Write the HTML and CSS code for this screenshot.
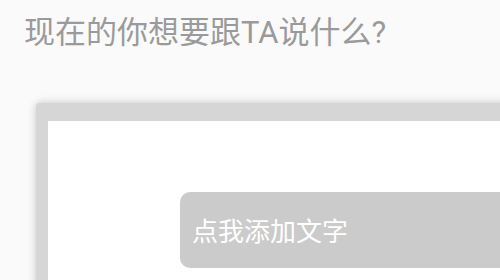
FILE: index.html
```html
<!DOCTYPE html>
<html lang="zh-CN">
<head>
    <meta charset="UTF-8">
    <title>说点什么</title>
    <link rel="stylesheet" href="styles.css">
</head>
<body>
    <div class="page">
        <h1 class="title">现在的你想要跟TA说什么?</h1>
        <div class="frame">
            <div class="paper">
                <div class="add-text">点我添加文字</div>
            </div>
        </div>
    </div>
</body>
</html>
```

FILE: styles.css
```css
*{
    margin: 0;
    padding: 0;
    box-sizing: border-box;
}
body{
    background: #fafafa;
    font-family: Roboto, "Noto Sans CJK SC", sans-serif;
}
.page{
    width: 500px;
    height: 280px;
    overflow: hidden;
    padding: 13px 0 0 24px;
}
.title{
    font-size: 31px;
    font-weight: normal;
    color: #9a9a9a;
    line-height: 40px;
    white-space: nowrap;
}
.frame{
    margin: 50px 0 0 12px;
    width: 600px;
    height: 300px;
    padding: 18px 0 0 12px;
    background: #d6d6d6;
    border-radius: 4px;
    box-shadow: 0 0 9px rgba(0,0,0,0.22);
}
.paper{
    height: 100%;
    background: #fff;
    padding: 71px 0 0 132px;
}
.add-text{
    height: 76px;
    background: #cbcbcb;
    border-radius: 10px;
    color: #fff;
    font-size: 26px;
    line-height: 72px;
    padding: 4px 0 0 12px;
    white-space: nowrap;
}
```
